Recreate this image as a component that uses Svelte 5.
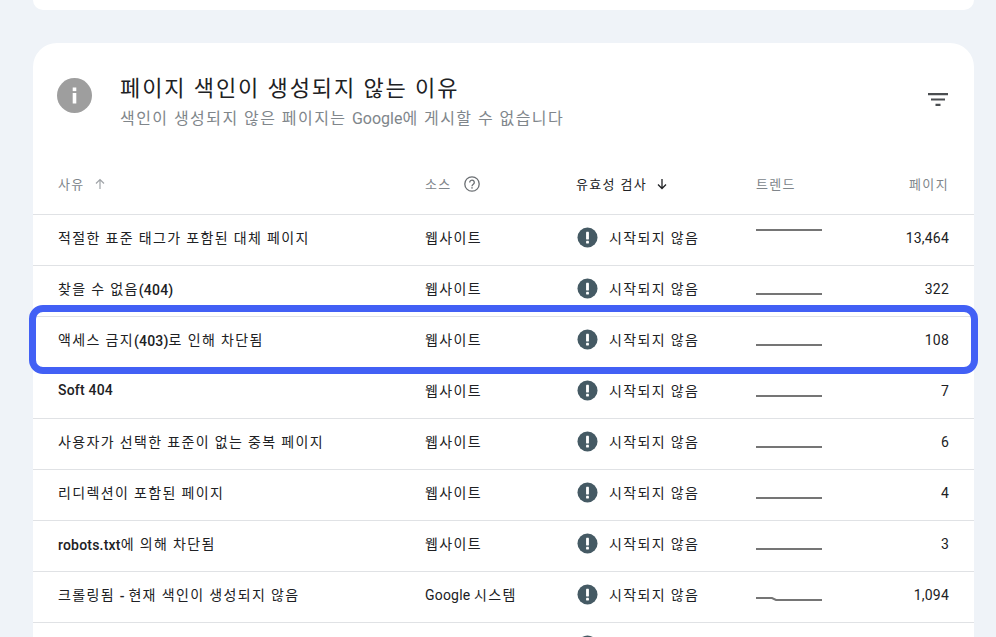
<script>
	const rows = [
		{ reason: '적절한 표준 태그가 포함된 대체 페이지', source: '웹사이트', trend: 'M0 13H66', pages: '13,464' },
		{ reason: '찾을 수 없음(404)', source: '웹사이트', trend: 'M0 26H66', pages: '322' },
		{ reason: '액세스 금지(403)로 인해 차단됨', source: '웹사이트', trend: 'M0 26H66', pages: '108' },
		{ reason: 'Soft 404', source: '웹사이트', trend: 'M0 26H66', pages: '7' },
		{ reason: '사용자가 선택한 표준이 없는 중복 페이지', source: '웹사이트', trend: 'M0 26H66', pages: '6' },
		{ reason: '리디렉션이 포함된 페이지', source: '웹사이트', trend: 'M0 26H66', pages: '4' },
		{ reason: 'robots.txt에 의해 차단됨', source: '웹사이트', trend: 'M0 26H66', pages: '3' },
		{ reason: '크롤링됨 - 현재 색인이 생성되지 않음', source: 'Google 시스템', trend: 'M0 24H16L20 26H66', pages: '1,094' }
	];

	// hangul runs get wider tracking than the latin ones
	const runs = (text) =>
		text
			.split(/([\uAC00-\uD7A3]+(?:\s+[\uAC00-\uD7A3]+)*\s*)/)
			.filter(Boolean)
			.map((part) => ({ text: part, ko: /[\uAC00-\uD7A3]/.test(part) }));
</script>

{#snippet label(text)}
	{#each runs(text) as part}<span class:ko={part.ko}>{part.text}</span>{/each}
{/snippet}

<div class="page">
	<div class="top-card"></div>

	<section class="card">
		<header class="card-header">
			<svg class="info" viewBox="0 0 35 35">
				<circle cx="17.5" cy="17.5" r="17.5" fill="#9e9e9e" />
				<rect x="15.7" y="15" width="3.6" height="10.5" fill="#fff" />
				<rect x="15.7" y="9.5" width="3.6" height="3.6" fill="#fff" />
			</svg>
			<div class="titles">
				<h1>페이지 색인이 생성되지 않는 이유</h1>
				<p>{@render label('색인이 생성되지 않은 페이지는 Google에 게시할 수 없습니다')}</p>
			</div>
			<svg class="filter" viewBox="0 0 20 13">
				<path d="M0 0h20v2.200H0zM3 5.400h14v2.200H3zM7.500 10.800h5v2.200h-5z" fill="#4a4d50" />
			</svg>
		</header>

		<div class="row head">
			<div class="cell with-icon">
				<span class="ko">사유</span>
				<svg class="sort" viewBox="0 0 12 12">
					<path d="M6 11V2M2 5.500 6 1.500l4 4" fill="none" stroke="#a0a4a8" stroke-width="1.200" />
				</svg>
			</div>
			<div class="cell with-icon">
				<span class="ko">소스</span>
				<svg class="help" viewBox="0 0 16 16">
					<circle cx="8" cy="8" r="7.200" fill="none" stroke="#6b6f73" stroke-width="1.300" />
					<path d="M5.700 6.400a2.300 2.300 0 1 1 3.600 1.900C8.500 8.900 8 9.300 8 10.300" fill="none" stroke="#6b6f73" stroke-width="1.300" />
					<rect x="7.300" y="11.200" width="1.400" height="1.400" fill="#6b6f73" />
				</svg>
			</div>
			<div class="cell with-icon active">
				<span class="ko">유효성 검사</span>
				<svg class="sort" viewBox="0 0 12 12">
					<path d="M6 1v9M2 6.500l4 4 4-4" fill="none" stroke="#202124" stroke-width="1.300" />
				</svg>
			</div>
			<div class="cell"><span class="ko">트렌드</span></div>
			<div class="cell num"><span class="ko">페이지</span></div>
		</div>

		{#each rows as row}
			<div class="row">
				<div class="cell reason">{@render label(row.reason)}</div>
				<div class="cell">{@render label(row.source)}</div>
				<div class="cell status">
					<svg class="warn" viewBox="0 0 22 22">
						<circle cx="11" cy="11" r="10.500" fill="#455a64" />
						<rect x="9.500" y="5" width="3" height="8" rx="0.500" fill="#fff" />
						<rect x="9.500" y="14.500" width="3" height="2.800" rx="0.500" fill="#fff" />
					</svg>
					<span class="ko">시작되지 않음</span>
				</div>
				<div class="cell">
					<svg class="trend" viewBox="0 0 66 40">
						<path d={row.trend} fill="none" stroke="#757575" stroke-width="2" />
					</svg>
				</div>
				<div class="cell num figure">{row.pages}</div>
			</div>
		{/each}

		<div class="row">
			<div class="cell"></div>
			<div class="cell"></div>
			<div class="cell status">
				<svg class="warn" viewBox="0 0 22 22">
					<circle cx="11" cy="11" r="10.500" fill="#455a64" />
				</svg>
			</div>
		</div>

		<div class="highlight"></div>
	</section>
</div>

<style>
	:global(body) {
		overflow: hidden;
		background: #eff3f8;
	}

	.page {
		height: 637px;
		overflow: hidden;
		padding: 0 22px 0 33px;
		font-family: Roboto, 'Noto Sans CJK KR', sans-serif;
		color: #202124;
	}

	.top-card {
		height: 10px;
		background: #fff;
		border-radius: 0 0 20px 20px;
	}

	.card {
		position: relative;
		margin-top: 33px;
		background: #fff;
		border-radius: 24px 24px 0 0;
	}

	.card-header {
		display: flex;
		align-items: flex-start;
		height: 105px;
		padding: 31px 26px 0 24px;
		box-sizing: border-box;
	}

	.info {
		width: 35px;
		height: 35px;
		margin-top: 4px;
		flex: none;
	}

	.titles {
		flex: 1;
		margin-left: 28px;
	}

	h1 {
		margin: 0;
		font-size: 22px;
		font-weight: 400;
		line-height: 30px;
		letter-spacing: 1.9px;
		color: #202124;
	}

	.titles p {
		margin: 4px 0 0;
		font-size: 16px;
		line-height: 22px;
		color: #80868b;
	}

	.titles .ko {
		letter-spacing: 1.45px;
	}

	.filter {
		width: 20px;
		height: 13px;
		margin-top: 19px;
		flex: none;
	}

	.row {
		display: grid;
		grid-template-columns: 367px 151px 180px 1fr 60px;
		align-items: center;
		height: 43px;
		padding: 0 25px 7px;
		border-top: 1px solid #e0e2e5;
		font-size: 14px;
		letter-spacing: 0.2px;
	}

	.ko {
		letter-spacing: 1.35px;
	}

	.reason {
		font-weight: 500;
	}

	.reason .ko {
		font-weight: 400;
		vertical-align: 1px;
	}

	.row.head {
		height: 62px;
		padding: 4px 25px 0;
		border-top: 0;
		color: #80868b;
		font-size: 13px;
	}

	.with-icon {
		display: flex;
		align-items: center;
		gap: 9px;
	}

	.active {
		color: #202124;
	}

	.sort {
		width: 12px;
		height: 12px;
		margin-top: 2px;
	}

	.help {
		width: 16px;
		height: 16px;
		margin: 1px 0 0 3px;
	}

	.status {
		display: flex;
		align-items: center;
		gap: 11px;
		margin-left: 1px;
	}

	.warn {
		width: 21px;
		height: 21px;
		margin-top: 2px;
		flex: none;
	}

	.trend {
		display: block;
		width: 66px;
		height: 40px;
	}

	.num {
		text-align: right;
	}

	.figure {
		padding-top: 2px;
	}

	.highlight {
		position: absolute;
		left: -4px;
		right: -4px;
		top: 262px;
		height: 69px;
		box-sizing: border-box;
		border: 7px solid #4260f5;
		border-radius: 14px;
	}
</style>
